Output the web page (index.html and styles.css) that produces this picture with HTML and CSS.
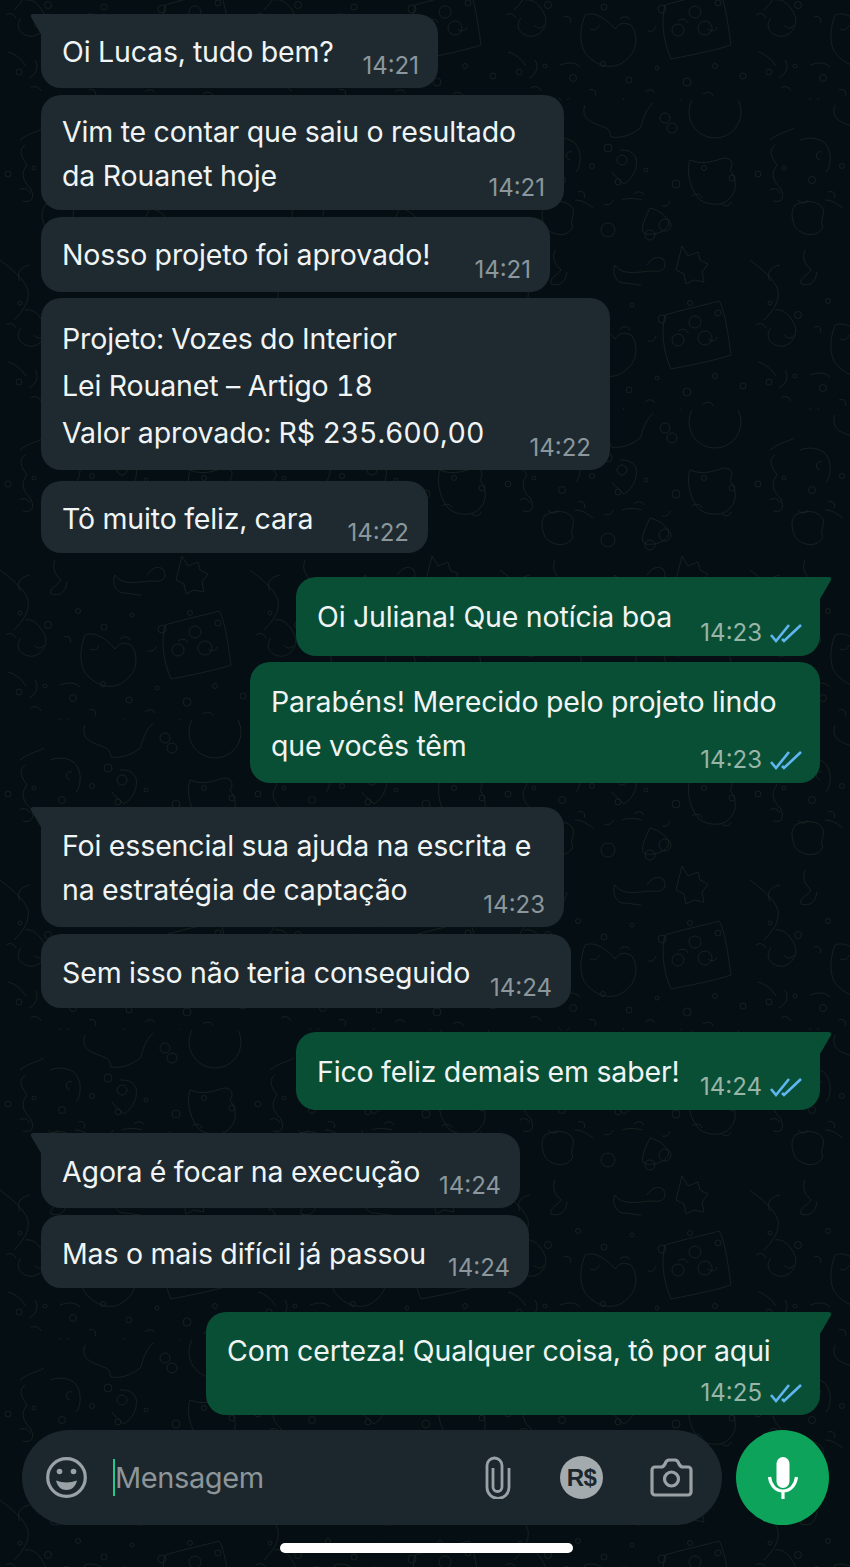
FILE: index.html
```html
<!DOCTYPE html>
<html lang="pt-BR">
<head>
<meta charset="utf-8">
<title>Conversa</title>
<link rel="stylesheet" href="styles.css">
</head>
<body>
<svg class="doodles" width="850" height="1567" aria-hidden="true">
  <defs>
    <g id="specks">
      <circle cx="8" cy="14" r="3"/><circle cx="34" cy="8" r="2"/><circle cx="62" cy="20" r="3.500"/><circle cx="92" cy="6" r="2.500"/><circle cx="118" cy="22" r="3"/><circle cx="146" cy="10" r="2"/><circle cx="176" cy="24" r="4"/><circle cx="204" cy="8" r="2.500"/><circle cx="232" cy="18" r="3"/>
      <path d="M20 30c4-3 8-1 10 3M48 40c3 4 8 4 10 0M78 32c5-2 8 2 6 6M104 44c4 2 8 0 9-4M134 34c3-3 8-3 10 1M162 46c4 1 7-1 8-5M192 36c4-3 9-2 10 2M222 44c3 3 8 2 9-2"/>
    </g>
    <pattern id="doodle" width="250" height="310" patternUnits="userSpaceOnUse" x="0" y="100">
      <g fill="none" stroke="#172120" stroke-width="0.9">
        <path d="M85 5c-5 14 8 18 14 20 8 4 10 2 12 12 12 2 24-4 30-10 2-10 6-18 12-24"/>
        <circle cx="215" cy="12" r="26"/>
        <path d="M20 40c10-8 18-8 24-12M25 45c-8 6-2 14 2 20-8 10-2 18 4 24 4 10 0 14-8 12"/>
        <path d="M50 40c10-4 24-2 28 8 4 8 2 20-2 24M72 52c-6-2-8 6-2 8"/>
        <circle cx="108" cy="48" r="4"/><circle cx="122" cy="60" r="5"/><circle cx="165" cy="18" r="5"/><circle cx="172" cy="28" r="5"/>
        <path d="M120 50c6 0 12 0 16 8 2 8-2 20-12 26-6-6-10-8-12-12"/>
        <path d="M190 60c-4 12 0 30 10 40 10 6 24 6 30-2 8-8 6-20 0-28 4-6 2-12-6-12-8 2-20 8-34 2z"/>
        <path d="M45 105c12-6 24-4 28 4 2 8-4 12 0 18-6 12-22 8-28 0-4-10-4-16 0-22zM75 100c8 0 12 4 18 8"/>
        <path d="M122 100c4-2 14-2 20 0M150 108c8 2 14 6 18 12 4 8-10 16-22 14-6-2-4-10 4-26z"/>
        <circle cx="108" cy="130" r="7"/><circle cx="165" cy="125" r="6"/><circle cx="150" cy="135" r="5"/>
        <path d="M182 146l6 10 10-4 2 8 8 4-6 8 2 10-10-2-8 4-2-10-8-4z"/>
        <path d="M0 160c10 8 24 18 28 30 2 12-6 22-14 30M30 165c-10 2-14 8-10 16"/>
        <path d="M115 165c8 12 26 6 38 6 12 2 14-6 10-12-6-4-12 0-16 6M115 165c-4 8 2 18 8 18 8 0 12 2 18 2"/>
        <path d="M55 150c-4 10 2 16 6 20-4 6-12 8-10 14 8 2 14 0 16-12"/>
        <path d="M165 215c20-6 40-10 54-14 6 8 10 40 12 54-18 6-40 10-60 14-8-18-10-38-6-54z"/>
        <circle cx="195" cy="222" r="6"/><circle cx="205" cy="238" r="7"/><circle cx="178" cy="240" r="6"/>
        <path d="M85 225c-6 16-6 34 4 42 10 10 26 14 38 2 10-8 12-24 4-34-6-2-10-4-16 4-8-10-20-18-30-14z"/>
        <path d="M25 210c8-2 16 6 20 16 4 10-6 22-16 20-10-2-14-10-8-18"/>
        <path d="M8 262c8 2 14 8 18 14M35 270c4 6 2 14-6 18M60 275c6-2 14-4 20 2"/>
        <use href="#specks" y="60"/><use href="#specks" x="-14" y="195"/><use href="#specks" x="11" y="268"/>
      </g>
    </pattern>
  </defs>
  <rect width="850" height="1567" fill="url(#doodle)"/>
</svg>

<main class="screen">
  <section class="chat">
    <div class="bubble in tail w397 h74"><p class="text">Oi Lucas, tudo bem?</p><span class="meta">14:21</span></div>
    <div class="bubble in w523 m7 h115"><p class="text">Vim te contar que saiu o resultado<br>da Rouanet hoje</p><span class="meta">14:21</span></div>
    <div class="bubble in w509 m7 h75"><p class="text">Nosso projeto foi aprovado!</p><span class="meta">14:21</span></div>
    <div class="bubble in w569 m6 h172 three"><p class="text">Projeto: Vozes do Interior<br>Lei Rouanet – Artigo 18<br>Valor aprovado: R$ 235.600,00</p><span class="meta">14:22</span></div>
    <div class="bubble in w387 m11 h72 low"><p class="text">Tô muito feliz, cara</p><span class="meta">14:22</span></div>

    <div class="bubble out tail w524 m24 h79"><p class="text">Oi Juliana! Que notícia boa</p><span class="meta">14:23<svg class="ticks" viewBox="0 0 32 20"><path d="M1 12l5 6L19 2M12 16l2 2L31 2"/></svg></span></div>
    <div class="bubble out w570 m6 h121"><p class="text">Parabéns! Merecido pelo projeto lindo<br>que vocês têm</p><span class="meta">14:23<svg class="ticks" viewBox="0 0 32 20"><path d="M1 12l5 6L19 2M12 16l2 2L31 2"/></svg></span></div>

    <div class="bubble in tail w523 m24 h120 mid"><p class="text">Foi essencial sua ajuda na escrita e<br>na estratégia de captação</p><span class="meta">14:23</span></div>
    <div class="bubble in w530 m7 h74 mid low"><p class="text">Sem isso não teria conseguido</p><span class="meta">14:24</span></div>

    <div class="bubble out tail w524 m24 h78"><p class="text">Fico feliz demais em saber!</p><span class="meta">14:24<svg class="ticks" viewBox="0 0 32 20"><path d="M1 12l5 6L19 2M12 16l2 2L31 2"/></svg></span></div>

    <div class="bubble in tail w479 m23 h75 mid"><p class="text">Agora é focar na execução</p><span class="meta">14:24</span></div>
    <div class="bubble in w488 m7 h73 mid low"><p class="text">Mas o mais difícil já passou</p><span class="meta">14:24</span></div>

    <div class="bubble out tail w614 m24 stacked"><p class="text">Com certeza! Qualquer coisa, tô por aqui</p><span class="meta">14:25<svg class="ticks" viewBox="0 0 32 20"><path d="M1 12l5 6L19 2M12 16l2 2L31 2"/></svg></span></div>
  </section>

  <footer class="composer">
    <div class="field">
      <svg class="icon smile" viewBox="0 0 41 41"><circle cx="20.500" cy="20.500" r="18.800"/><circle class="fill" cx="13.500" cy="14.500" r="2.800"/><circle class="fill" cx="27.500" cy="14.500" r="2.800"/><path class="fill" d="M10 23.500c7 2.500 14 2.500 21 0-1.500 6.500-5.500 9.500-10.500 9.500S11.500 30 10 23.500z"/></svg>
      <span class="placeholder">Mensagem</span>
      <svg class="icon clip" viewBox="0 0 26 43"><path d="M24 12v19.500a11 11 0 0 1-22 0V9.500a7.500 7.500 0 0 1 15 0V31a4.500 4.500 0 0 1-9 0V12"/></svg>
      <span class="real">R$</span>
      <svg class="icon camera" viewBox="0 0 43 39"><path d="M2 12a3 3 0 0 1 3-3h6c2 0 3-1 4-3 1-3 2-4 4-4h6c2 0 3 1 4 4 1 2 2 3 4 3h5a3 3 0 0 1 3 3v22a3 3 0 0 1-3 3H5a3 3 0 0 1-3-3z"/><circle cx="21.500" cy="21" r="7"/></svg>
    </div>
    <button class="mic" type="button" aria-label="Gravar áudio">
      <svg viewBox="0 0 30 42" width="30" height="42"><rect x="8.500" y="0" width="13" height="31" rx="6.500" fill="#fff"/><path d="M1.500 20c1 8 6 14 13.500 14s12.500-6 13.500-14M15 34v8" fill="none" stroke="#fff" stroke-width="3.200"/></svg>
    </button>
  </footer>
  <div class="home"></div>
</main>
</body>
</html>
```
FILE: styles.css
```css
* { box-sizing: border-box; }
html, body { margin: 0; background: #040e13; }
body { width: 850px; height: 1567px; overflow: hidden; position: relative; font-family: Inter, "Liberation Sans", sans-serif; }
.doodles { position: absolute; top: 0; left: 0; }
.screen { position: relative; display: flex; flex-direction: column; height: 1567px; }

.chat { display: flex; flex-direction: column; padding: 14px 30px 0 41px; height: 1415px; }
.bubble { position: relative; display: flex; align-items: flex-end; padding: 0 19px 6px 21px; border-radius: 20px; color: #f1f4f4; }
.in { align-self: flex-start; background: #1e2a30; }
.out { align-self: flex-end; padding-right: 18px; padding-bottom: 7px; background: #094f35; }
.text { flex: 1 1 0; min-width: 0; align-self: flex-start; margin: 0; padding-top: 16px; font-size: 28.5px; line-height: 43.5px; letter-spacing: -0.13px; font-variant-numeric: tabular-nums; white-space: nowrap; }
.out .text { padding-top: 18px; }
.mid .text { padding-top: 17px; }
.h115 .text { padding-top: 15px; }
.low { padding-bottom: 4px; }
.meta { display: flex; flex: none; align-items: center; gap: 8px; font-size: 24px; line-height: 32px; color: #8b979c; white-space: nowrap; }
.out .meta { color: #98b5a8; }
.ticks { width: 32px; height: 20px; fill: none; stroke: #5fb6f0; stroke-width: 2.600; }

.tail.in { border-top-left-radius: 0; }
.tail.out { border-top-right-radius: 0; }
.tail::before { content: ""; position: absolute; top: 0; width: 12px; height: 22px; background: inherit; }
.tail.in::before { left: -11px; clip-path: path("M12 0H4Q-1 0 1.500 4L12 22Z"); }
.tail.out::before { right: -12px; clip-path: path("M0 0H8Q13 0 10.500 4L0 22Z"); }

.w387 { width: 387px; } .w397 { width: 397px; } .w479 { width: 479px; } .w488 { width: 488px; }
.w509 { width: 509px; } .w523 { width: 523px; } .w524 { width: 524px; } .w530 { width: 530px; }
.w569 { width: 569px; } .w570 { width: 570px; } .w614 { width: 614px; }
.m6 { margin-top: 6px; } .m7 { margin-top: 7px; } .m11 { margin-top: 11px; } .m23 { margin-top: 23px; } .m24 { margin-top: 24px; }
.h72 { height: 72px; } .h73 { height: 73px; } .h74 { height: 74px; } .h75 { height: 75px; } .h78 { height: 78px; } .h79 { height: 79px; }
.h115 { height: 115px; } .h120 { height: 120px; } .h121 { height: 121px; } .h172 { height: 172px; }

.three .text { padding-top: 17px; line-height: 47px; }
.stacked { flex-direction: column; height: 103px; padding-bottom: 6px; }
.stacked .text { flex: none; align-self: flex-start; padding-top: 17px; }
.stacked .meta { margin-top: auto; align-self: flex-end; }

.composer { display: flex; gap: 14px; padding: 15px 21px 0 22px; }
.field { display: flex; align-items: center; width: 700px; height: 95px; padding: 0 29px 0 24px; border-radius: 48px; background: #1b272d; }
.icon { display: block; flex: none; fill: none; stroke: #9aa2a6; stroke-width: 3.200; }
.icon .fill { fill: #9aa2a6; stroke: none; }
.smile { width: 41px; height: 41px; }
.placeholder { flex: 1; height: 37px; margin-left: 26px; border-left: 2px solid #25c98a; font-size: 29px; line-height: 37px; color: #8d9598; letter-spacing: -0.4px; }
.clip { width: 26px; height: 43px; stroke-width: 2.800; }
.real { display: flex; flex: none; align-items: center; justify-content: center; width: 43px; height: 43px; margin-left: 49px; border-radius: 50%; background: #a4abae; color: #1b272d; font-family: "Liberation Sans", sans-serif; font-size: 24px; font-weight: 700; letter-spacing: -0.5px; }
.camera { width: 43px; height: 39px; margin-left: 47px; }
.mic { display: flex; align-items: center; justify-content: center; width: 93px; height: 95px; padding: 0; border: 0; border-radius: 50%; background: #0ea35a; }
.home { width: 293px; height: 10px; margin: 18px 0 0 280px; border-radius: 5px; background: #fff; }
```
